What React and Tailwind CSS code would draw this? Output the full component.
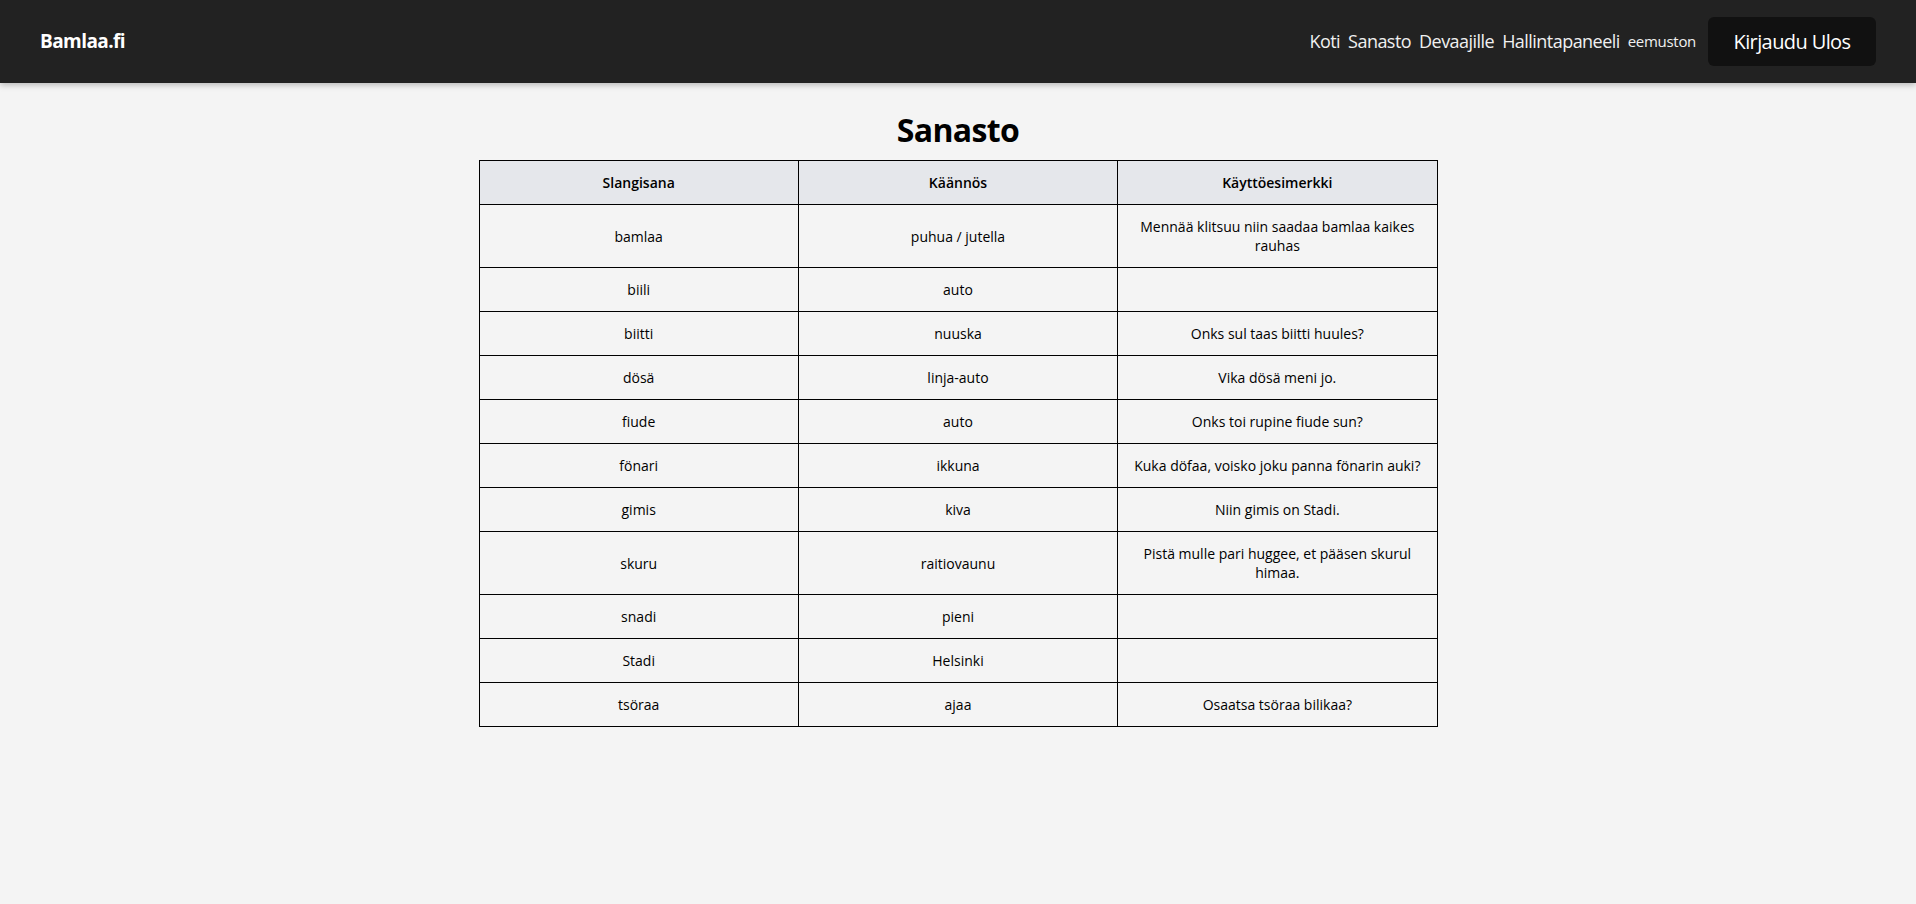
const rows = [
  ["bamlaa", "puhua / jutella", "Mennää klitsuu niin saadaa bamlaa kaikes rauhas"],
  ["biili", "auto", ""],
  ["biitti", "nuuska", "Onks sul taas biitti huules?"],
  ["dösä", "linja-auto", "Vika dösä meni jo."],
  ["fiude", "auto", "Onks toi rupine fiude sun?"],
  ["fönari", "ikkuna", "Kuka döfaa, voisko joku panna fönarin auki?"],
  ["gimis", "kiva", "Niin gimis on Stadi."],
  ["skuru", "raitiovaunu", "Pistä mulle pari huggee, et pääsen skurul himaa."],
  ["snadi", "pieni", ""],
  ["Stadi", "Helsinki", ""],
  ["tsöraa", "ajaa", "Osaatsa tsöraa bilikaa?"],
];

const Navbar = () => {
  return (
    <nav className="h-[83px] bg-[#222222] text-white flex items-center justify-between px-10 shadow-[0_2px_6px_rgba(0,0,0,0.25)] relative">
      <a className="text-[19px] font-bold tracking-[-0.03em]">Bamlaa.fi</a>

      <div className="flex items-center">
        <div className="flex items-center gap-2 text-[18px] tracking-[-0.03em] text-[#f0f0f0]">
          <a>Koti</a>
          <a>Sanasto</a>
          <a>Devaajille</a>
          <a>Hallintapaneeli</a>
        </div>
        <span className="ml-2 text-[15px] tracking-[-0.02em] text-[#f0f0f0]">eemuston</span>
        <button className="ml-3 h-[49px] w-[168px] rounded-md bg-[#111111] text-[20px] font-medium tracking-[-0.03em]">
          Kirjaudu Ulos
        </button>
      </div>
    </nav>
  );
};

export default function App() {
  return (
    <div className="min-h-screen bg-[#f4f4f4] text-black font-['Open_Sans','Noto_Sans',sans-serif]">
      <Navbar />

      <main className="flex flex-col items-center pt-[26px]">
        <h1 className="text-[32px] leading-[42px] font-bold tracking-[-0.02em] mb-[9px]">Sanasto</h1>

        <table className="w-[959px] border-collapse table-fixed text-[14px] leading-[19px] text-center">
          <thead>
            <tr className="bg-[#e5e7eb]">
              <th className="border border-black p-3 font-semibold">Slangisana</th>
              <th className="border border-black p-3 font-semibold">Käännös</th>
              <th className="border border-black p-3 font-semibold">Käyttöesimerkki</th>
            </tr>
          </thead>
          <tbody>
            {rows.map((r, i) => (
              <tr key={i}>
                <td className="border border-black p-3">{r[0]}</td>
                <td className="border border-black p-3">{r[1]}</td>
                <td className="border border-black p-3">{r[2]}</td>
              </tr>
            ))}
          </tbody>
        </table>
      </main>
    </div>
  );
}
